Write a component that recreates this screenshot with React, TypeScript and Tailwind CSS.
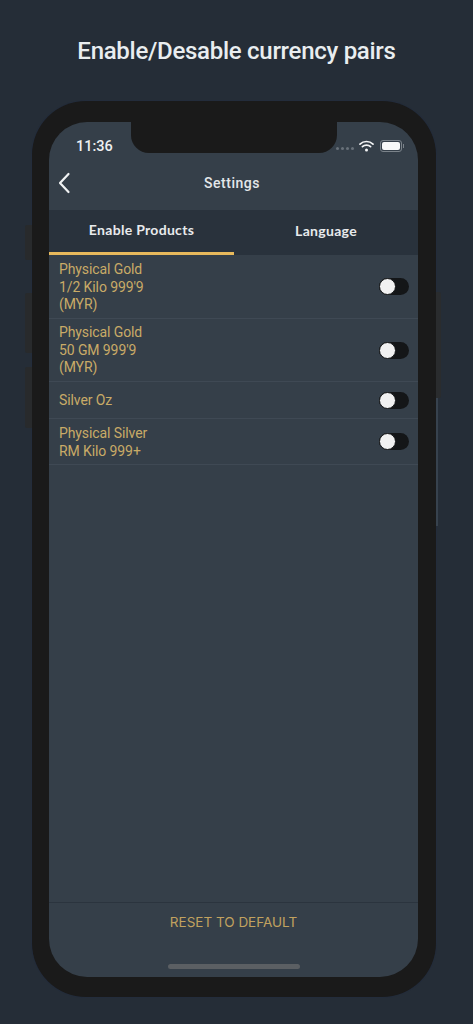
import React from "react";

const rows = [
  { lines: ["Physical Gold", "1/2 Kilo 999'9", "(MYR)"], cls: "h-[64px]", text: "pt-[2px]" },
  { lines: ["Physical Gold", "50 GM 999'9", "(MYR)"], cls: "h-[63px]", text: "pt-[1px]" },
  { lines: ["Silver Oz"], cls: "h-[37px]", text: "pt-[2px]" },
  { lines: ["Physical Silver", "RM Kilo 999+"], cls: "h-[46px]", text: "pt-[2px]" },
];

function Toggle() {
  return (
    <div className="relative w-[30px] h-[17px] rounded-full bg-[#141618]">
      <div className="absolute left-0 top-0 w-[17px] h-[17px] rounded-full bg-[#f1f1f1] border border-[#141618]" />
    </div>
  );
}

export default function App() {
  return (
    <div className="relative w-[473px] h-[1024px] overflow-hidden bg-[#252d37] font-['Roboto',sans-serif] flex flex-col items-center">
      <h1 className="mt-[34px] h-[34px] leading-[34px] text-[24px] font-medium text-[#e9edf0] tracking-[-0.28px]">
        Enable/Desable currency pairs
      </h1>

      <div className="relative mt-[33px] self-start ml-[32px] w-[404px] h-[896px] rounded-[54px] bg-[#1a1a1a] shadow-[0_0_0_1px_#232c3b] pl-[17px] pr-[18px] pt-[21px] pb-[20px]">
        {/* Side buttons */}
        <div className="absolute left-[-7px] top-[124px] w-[7px] h-[35px] rounded-l-[2px] bg-[#282a2c]" />
        <div className="absolute left-[-7px] top-[192px] w-[7px] h-[60px] rounded-l-[2px] bg-[#282a2c]" />
        <div className="absolute left-[-7px] top-[266px] w-[7px] h-[61px] rounded-l-[2px] bg-[#282a2c]" />
        <div className="absolute right-[-5px] top-[191px] w-[5px] h-[106px] rounded-r-[2px] bg-[#2a2c2e]" />
        <div className="absolute right-[-2px] top-[297px] w-[2px] h-[128px] bg-[#37424e]" />

        <div className="relative w-full h-full rounded-[38px] overflow-hidden bg-[#353f49] flex flex-col">
          {/* Notch */}
          <div className="absolute left-[82px] top-0 w-[206px] h-[31px] rounded-b-[18px] bg-[#1a1a1a]" />

          {/* Status bar */}
          <div className="h-[46px] shrink-0 flex items-center justify-between pl-[27px] pr-[14px] pt-[2px]">
            <span className="text-[14.5px] font-medium leading-none text-[#eef0f1] mt-[3px]">11:36</span>
            <div className="flex items-center gap-[5px]">
              <div className="flex gap-[2px] mt-[5px]">
                <span className="w-[3px] h-[3px] rounded-full bg-[#68717a]" />
                <span className="w-[3px] h-[3px] rounded-full bg-[#68717a]" />
                <span className="w-[3px] h-[3px] rounded-full bg-[#68717a]" />
                <span className="w-[3px] h-[3px] rounded-full bg-[#68717a]" />
              </div>
              <svg width="15" height="12" viewBox="0 0 15 12" fill="none" stroke="#f4f5f6" strokeLinecap="round">
                <path d="M1 4.2C4.6 .6 10.4 .6 14 4.2" strokeWidth="1.7" />
                <path d="M3.4 6.7c2.3-2.2 5.9-2.2 8.2 0" strokeWidth="1.7" />
                <circle cx="7.5" cy="10" r="1.5" fill="#f4f5f6" stroke="none" />
              </svg>
              <div className="flex items-center ml-[1px]">
                <div className="w-[22px] h-[12px] rounded-[3px] border border-[#7b838a] p-[1px]">
                  <div className="w-full h-full rounded-[2px] bg-[#f7f8f8]" />
                </div>
                <div className="w-[1px] h-[4px] bg-[#7b838a] ml-[1px]" />
              </div>
            </div>
          </div>

          {/* Header */}
          <div className="relative h-[42px] shrink-0 flex items-center justify-center">
            <svg className="absolute left-[8px] top-[4px]" width="14" height="22" viewBox="0 0 14 22" fill="none">
              <path d="M11.5 2 3 11l8.5 9" stroke="#f0f2f3" strokeWidth="2.2" strokeLinecap="round" strokeLinejoin="round" />
            </svg>
            <span className="text-[14px] font-medium text-[#e4e7e9] -mt-[11px] tracking-[0.55px] ml-[-3px]">Settings</span>
          </div>

          {/* Tabs */}
          <div className="h-[45px] shrink-0 flex bg-[#29323c] font-['Lato',sans-serif]">
            <div className="w-[185px] h-full flex items-center justify-center border-b-[3px] border-[#e7b95c] pb-[3px]">
              <span className="text-[14px] font-bold text-[#e8eaec] tracking-[0.3px]">Enable Products</span>
            </div>
            <div className="flex-1 h-full flex items-center justify-center pb-[5px]">
              <span className="text-[14px] font-bold text-[#e8eaec] tracking-[0.3px]">Language</span>
            </div>
          </div>

          {/* List */}
          <div className="flex flex-col">
            {rows.map((r, i) => (
              <div key={i} className={`${r.cls} flex items-center justify-between pl-[10px] pr-[9px] border-b border-[#3f4954]`}>
                <div className={`${r.text} text-[14px] leading-[17.4px] text-[#c9ab67] tracking-[-0.1px]`}>
                  {r.lines.map((l) => (
                    <div key={l}>{l}</div>
                  ))}
                </div>
                <Toggle />
              </div>
            ))}
          </div>

          {/* Footer */}
          <div className="mt-auto h-[75px] shrink-0 border-t border-[#2b343e] relative flex justify-center">
            <span className="mt-[11px] font-['Inter',sans-serif] text-[13.5px] leading-[17px] text-[#c1a25f]">RESET TO DEFAULT</span>
            <div className="absolute bottom-[8px] left-[119px] w-[132px] h-[5px] rounded-full bg-[#5b5f63]" />
          </div>
        </div>
      </div>
    </div>
  );
}
